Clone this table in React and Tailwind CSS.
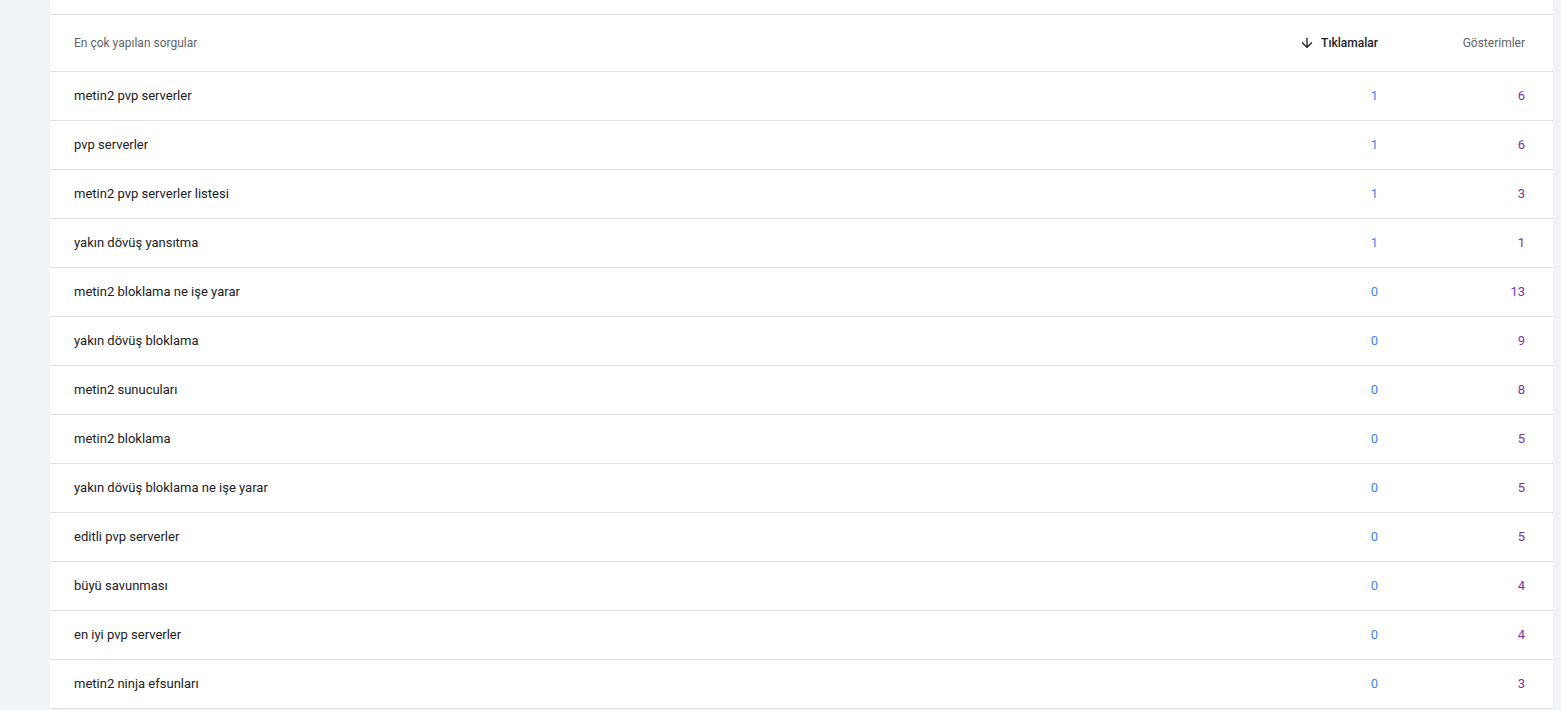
import React from "react";

const rows = [
  { query: "metin2 pvp serverler", clicks: 1, impressions: 6 },
  { query: "pvp serverler", clicks: 1, impressions: 6 },
  { query: "metin2 pvp serverler listesi", clicks: 1, impressions: 3 },
  { query: "yakın dövüş yansıtma", clicks: 1, impressions: 1 },
  { query: "metin2 bloklama ne işe yarar", clicks: 0, impressions: 13 },
  { query: "yakın dövüş bloklama", clicks: 0, impressions: 9 },
  { query: "metin2 sunucuları", clicks: 0, impressions: 8 },
  { query: "metin2 bloklama", clicks: 0, impressions: 5 },
  { query: "yakın dövüş bloklama ne işe yarar", clicks: 0, impressions: 5 },
  { query: "editli pvp serverler", clicks: 0, impressions: 5 },
  { query: "büyü savunması", clicks: 0, impressions: 4 },
  { query: "en iyi pvp serverler", clicks: 0, impressions: 4 },
  { query: "metin2 ninja efsunları", clicks: 0, impressions: 3 },
];

const App = () => {
  return (
    <div
      className="min-h-[710px] bg-[#f0f4f9] pl-[50px] pr-[8px]"
      style={{ fontFamily: "Roboto, 'Liberation Sans', sans-serif" }}
    >
      <div className="bg-white pt-[14px]">
        <table className="w-full border-collapse">
          <thead>
            <tr className="h-[57px] border-y border-[#e0e0e0]">
              <th className="pl-[24px] text-left text-[12px] font-normal text-[#5f6368]">
                En çok yapılan sorgular
              </th>
              <th className="w-[147px] text-[12px] font-medium text-[#202124]">
                <div className="flex items-center justify-end gap-[6px]">
                  <svg width="16" height="16" viewBox="0 0 24 24" fill="#202124">
                    <path d="M20 12l-1.41-1.41L13 16.17V4h-2v12.17l-5.58-5.59L4 12l8 8 8-8z" />
                  </svg>
                  <span>Tıklamalar</span>
                </div>
              </th>
              <th className="w-[175px] pr-[28px] text-right text-[12px] font-normal text-[#5f6368]">
                Gösterimler
              </th>
            </tr>
          </thead>
          <tbody>
            {rows.map((row) => (
              <tr key={row.query} className="h-[49px] border-b border-[#e0e0e0]">
                <td className="pl-[24px] text-[13px] text-[#202124]">{row.query}</td>
                <td className="text-right text-[13px] text-[#4285f4]">{row.clicks}</td>
                <td className="pr-[28px] text-right text-[13px] text-[#7b33ad]">
                  {row.impressions}
                </td>
              </tr>
            ))}
          </tbody>
        </table>
      </div>
    </div>
  );
};

export default App;
